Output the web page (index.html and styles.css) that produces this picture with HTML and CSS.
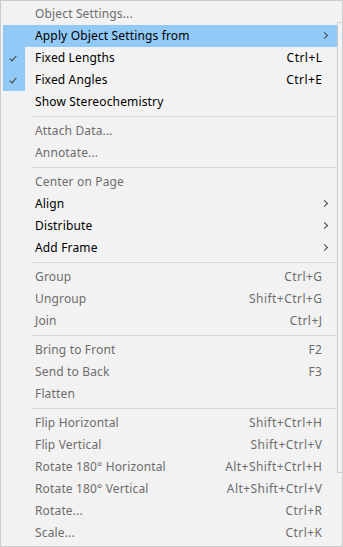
FILE: index.html
```html
<!DOCTYPE html>
<html lang="en">
<head>
    <meta charset="UTF-8">
    <title>Object Menu</title>
    <link rel="stylesheet" href="styles.css">
</head>
<body>

<div class="menu">
    <div class="item disabled"><span class="label">Object Settings...</span></div>
    <div class="item active"><span class="label">Apply Object Settings from</span><span class="arrow"></span></div>
    <div class="item checked"><span class="check"></span><span class="label">Fixed Lengths</span><span class="key">Ctrl+L</span></div>
    <div class="item checked"><span class="check"></span><span class="label">Fixed Angles</span><span class="key">Ctrl+E</span></div>
    <div class="item"><span class="label">Show Stereochemistry</span></div>
    <div class="sep"></div>

    <div class="item disabled"><span class="label">Attach Data...</span></div>
    <div class="item disabled"><span class="label">Annotate...</span></div>
    <div class="sep"></div>

    <div class="item disabled"><span class="label">Center on Page</span></div>
    <div class="item"><span class="label">Align</span><span class="arrow"></span></div>
    <div class="item"><span class="label">Distribute</span><span class="arrow"></span></div>
    <div class="item"><span class="label">Add Frame</span><span class="arrow"></span></div>
    <div class="sep"></div>

    <div class="item disabled"><span class="label">Group</span><span class="key">Ctrl+G</span></div>
    <div class="item disabled"><span class="label">Ungroup</span><span class="key">Shift+Ctrl+G</span></div>
    <div class="item disabled"><span class="label">Join</span><span class="key">Ctrl+J</span></div>
    <div class="sep"></div>

    <div class="item disabled"><span class="label">Bring to Front</span><span class="key">F2</span></div>
    <div class="item disabled"><span class="label">Send to Back</span><span class="key">F3</span></div>
    <div class="item disabled"><span class="label">Flatten</span></div>
    <div class="sep"></div>

    <div class="item disabled"><span class="label">Flip Horizontal</span><span class="key">Shift+Ctrl+H</span></div>
    <div class="item disabled"><span class="label">Flip Vertical</span><span class="key">Shift+Ctrl+V</span></div>
    <div class="item disabled"><span class="label">Rotate 180° Horizontal</span><span class="key">Alt+Shift+Ctrl+H</span></div>
    <div class="item disabled"><span class="label">Rotate 180° Vertical</span><span class="key">Alt+Shift+Ctrl+V</span></div>
    <div class="item disabled"><span class="label">Rotate...</span><span class="key">Ctrl+R</span></div>
    <div class="item disabled"><span class="label">Scale...</span><span class="key">Ctrl+K</span></div>

    <!-- edge of the opened submenu -->
    <div class="submenu"></div>
</div>

</body>
</html>
```

FILE: styles.css
```css
/* Page */
body {
    margin: 0;
    padding: 0;
    background: #f2f2f2;
    font-family: "Noto Sans", "Open Sans", sans-serif;
    font-size: 12px;
    color: #000;
}

/* Menu box */
.menu {
    position: relative;
    width: 337px;
    height: 541px;
    padding: 2px;
    border: 1px solid #cccccc;
    background: #f2f2f2;
    overflow: hidden;
}

.item {
    display: flex;
    align-items: center;
    position: relative;
    height: 22px;
    padding: 0 18px 0 32px;
    line-height: 22px;
    white-space: nowrap;
}

.item .label {
    flex-grow: 1;
    letter-spacing: 0.15px;
}

.item .key {
    text-align: right;
    letter-spacing: 0.45px;
    margin-right: -0.45px;
}

.item.disabled {
    color: #6d6d6d;
}

.item.active {
    background-color: #91c9f7;
}

/* Check mark gutter */
.check {
    position: absolute;
    left: 0;
    top: 0;
    width: 22px;
    height: 22px;
    background-color: #91c9f7;
}

.check::after {
    content: "";
    position: absolute;
    left: 8px;
    top: 7px;
    width: 3px;
    height: 6px;
    border-right: 1.5px solid #3c3c3c;
    border-bottom: 1.5px solid #3c3c3c;
    transform: rotate(40deg);
}

/* Submenu chevron */
.arrow {
    position: absolute;
    right: 13px;
    top: 8px;
    width: 4px;
    height: 4px;
    border-top: 1px solid #444;
    border-right: 1px solid #444;
    transform: rotate(45deg);
}

/* Separator */
.sep {
    height: 1px;
    margin: 3px 0 3px 28px;
    background-color: #d7d7d7;
}

/* Opened submenu peeking out on the right */
.submenu {
    position: absolute;
    left: 336px;
    top: 21px;
    width: 20px;
    height: 449px;
    border: 1px solid #cccccc;
    background: #f2f2f2;
}
```
